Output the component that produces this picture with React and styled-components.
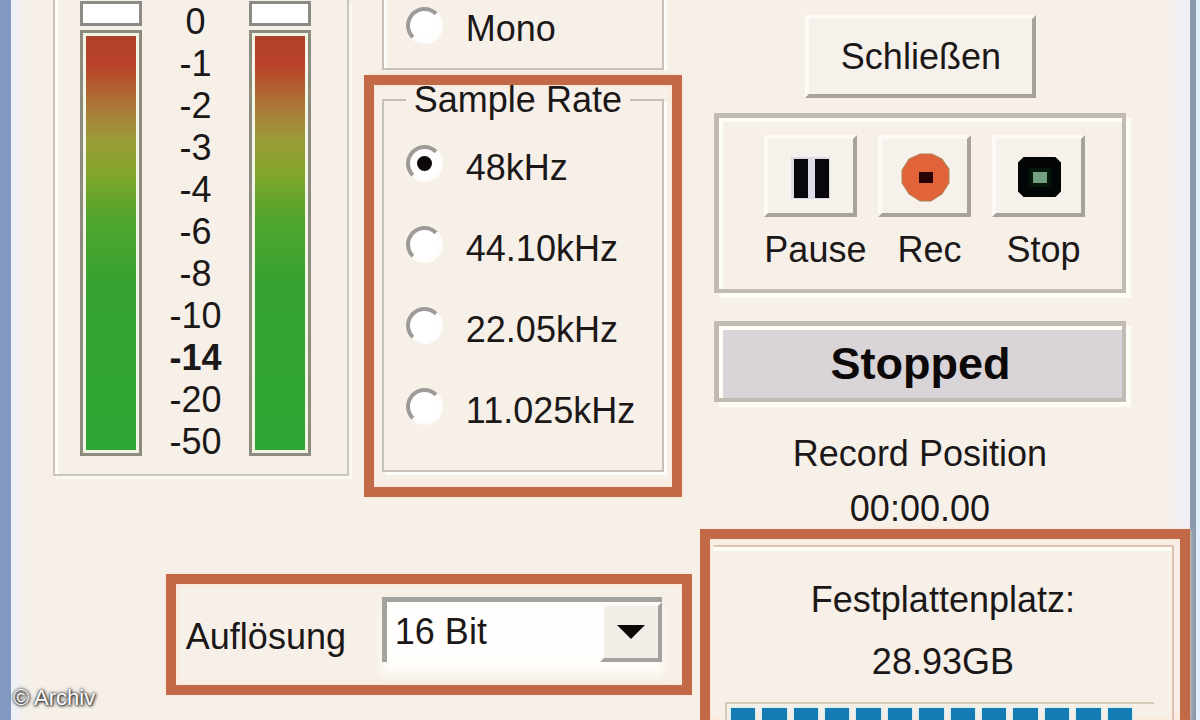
import React, { useState } from 'react';
import styled, { createGlobalStyle } from 'styled-components';

const GlobalStyle = createGlobalStyle`
  * {
    box-sizing: border-box;
  }

  body {
    margin: 0;
    background: #f6f0e9;
    color: #1c1818;
    font-family: 'Liberation Sans', Arial, sans-serif;
    font-size: 36px;
    line-height: 42px;
  }
`;

const Window = styled.main`
  position: relative;
  display: grid;
  grid-template-columns: 682fr 497fr;
  column-gap: 8px;
  min-height: 100vh;
  border-left: 11px solid #8299c1;
  border-right: 4px solid #dff0fa;
  background: linear-gradient(
    to right,
    #eef0f8 0,
    #f4efea 14px,
    #f6f0e9 24px,
    #f6f0e9 calc(100% - 32px),
    #f1eff4 calc(100% - 16px),
    #f1eff4 calc(100% - 6px),
    #8b98ab calc(100% - 6px)
  );
`;

const Settings = styled.section`
  display: flex;
  flex-direction: column;
  align-items: flex-end;
  justify-content: space-between;
  padding-bottom: 25px;
`;

const TopRow = styled.div`
  display: flex;
  align-items: flex-start;
  align-self: stretch;
  gap: 15px;
  padding: 0 10px 0 42px;
`;

const Levels = styled.div`
  flex: 1;
  display: flex;
  justify-content: space-between;
  height: 476px;
  padding: 1px 36px 18px 25px;
  border: 2px solid #cbc5be;
  border-top: 0;
  box-shadow: inset 3px 0 0 #fffdfa, 3px 3px 0 #fbf8f4;
`;

const Meter = styled.div`
  display: flex;
  flex-direction: column;
  gap: 4px;
  width: 62px;
`;

const ClipLamp = styled.div`
  height: 25px;
  border: 3px solid #8d8b86;
  background: #fff;
`;

const MeterBar = styled.div`
  flex: 1;
  padding: 3px;
  border: 3px solid #8d8b7d;
  background: #f3f6e4;
`;

const MeterFill = styled.div`
  height: 100%;
  background: linear-gradient(
    #b03f2b 0,
    #ba432a 30px,
    #a97d38 75px,
    #9a9c38 105px,
    #84a52a 135px,
    #4fa52d 185px,
    #35a231 250px,
    #2ca534 100%
  );
`;

const Scale = styled.ol`
  margin: 0;
  padding: 0;
  list-style: none;
  text-align: center;
`;

const Mark = styled.li`
  font-weight: ${props => (props.$bold ? 'bold' : 'normal')};
`;

const Options = styled.div`
  display: flex;
  flex-direction: column;
  gap: 5px;
  width: 318px;
`;

const ChannelGroup = styled.div`
  height: 70px;
  margin: 0 18px;
  padding: 6px 0 0 22px;
  border: 2px solid #c6c1bb;
  border-top: 0;
  box-shadow: inset 3px 0 0 #fffdfa, 3px 0 0 #fffdfa;
`;

const Highlight = styled.div`
  border: 10px solid #c26a48;
  background: #f7f0e9;
  box-shadow: 0 0 4px #ffe0c8, inset 0 0 6px #ffe3d0;
`;

const RateHighlight = styled(Highlight)`
  padding: 0 8px 15px;
`;

const RateGroup = styled.fieldset`
  min-width: 0;
  margin: 0;
  padding: 11px 0 20px 22px;
  border: 2px solid #c6c1bb;
  box-shadow: 3px 3px 0 #fffdfa;
`;

const Legend = styled.legend`
  padding: 0 8px;
  line-height: 30px;
  white-space: nowrap;
`;

const RadioLabel = styled.label`
  display: flex;
  align-items: center;
  gap: 23px;
  height: ${props => (props.$tall ? '81px' : '44px')};
`;

const RadioText = styled.span`
  padding-top: 2px;
`;

const RadioInput = styled.input`
  appearance: none;
  flex: none;
  display: grid;
  place-items: center;
  width: 37px;
  height: 37px;
  margin: 0 0 6px;
  border: 4px solid;
  border-color: #9d9a97 #fffdfb #fffdfb #9d9a97;
  border-radius: 50%;
  background: #fff;

  &:checked::before {
    content: '';
    width: 15px;
    height: 15px;
    border-radius: 50%;
    background: #0d0909;
  }
`;

const Radio = ({ name, label, tall, checked, onChange }) => (
  <RadioLabel $tall={tall}>
    <RadioInput type="radio" name={name} checked={checked} onChange={onChange} />
    <RadioText>{label}</RadioText>
  </RadioLabel>
);

const ResolutionHighlight = styled(Highlight)`
  display: flex;
  align-items: flex-start;
  justify-content: space-between;
  width: 526px;
  height: 121px;
  padding: 13px 20px 0 10px;
`;

const ResolutionLabel = styled.label`
  padding-top: 19px;
`;

const SelectBox = styled.div`
  position: relative;
  width: 280px;
  height: 65px;
`;

const Select = styled.select`
  appearance: none;
  width: 100%;
  height: 100%;
  padding: 0 70px 0 8px;
  border: 5px solid #a3a29f;
  border-right-width: 0;
  border-bottom-width: 0;
  border-radius: 0;
  background: #fffefc;
  box-shadow: 0 12px 8px #fffdf8;
  color: inherit;
  font: inherit;
`;

const SelectArrow = styled.span`
  position: absolute;
  right: 0;
  top: 5px;
  bottom: 0;
  display: flex;
  align-items: center;
  justify-content: center;
  width: 62px;
  border: 4px solid #a3a29f;
  border-top-color: #fffefc;
  border-left-color: #fffefc;
  background: #f4eee8;
  pointer-events: none;
`;

const Recorder = styled.section`
  display: flex;
  flex-direction: column;
  align-items: stretch;
  padding-top: 15px;
  padding-right: 6px;
`;

const Raised = styled.button`
  border: 4px solid;
  border-color: #fdfaf5 #a8a29c #a8a29c #fdfaf5;
  border-radius: 0;
  background: #f6f1ea;
  color: inherit;
  font: inherit;
`;

const CloseButton = styled(Raised)`
  align-self: center;
  width: 231px;
  height: 83px;
  margin-right: 48px;
  padding: 0;
`;

const Sunken = styled.div`
  margin: 0 64px 0 14px;
  border: 4px solid #c2bbb3;
  border-top-width: 5px;
  border-left-width: 5px;
  box-shadow: 5px 5px 0 #fffdf8, inset 4px 4px 0 #fffdf8;
`;

const Transport = styled(Sunken)`
  display: flex;
  justify-content: center;
  gap: 11px;
  height: 180px;
  margin-top: 15px;
  padding: 17px 0 0 18px;
`;

const TransportItem = styled.div`
  width: 103px;
  text-align: center;
`;

const TransportButton = styled(Raised)`
  display: flex;
  align-items: center;
  justify-content: center;
  width: 93px;
  height: 82px;
  padding: 4px 0 0 4px;
`;

const Caption = styled.label`
  display: block;
  margin-top: 12px;
`;

const Status = styled(Sunken)`
  height: 81px;
  margin-top: 28px;
  background: #d8d4d7;
  color: #0d0909;
  font-size: 45px;
  font-weight: bold;
  line-height: 76px;
  text-align: center;
`;

const Readout = styled.div`
  display: flex;
  flex-direction: column;
  gap: 15px;
  margin-right: 60px;
  padding: 32px 0 0 10px;
  line-height: 40px;
  text-align: center;
`;

const DiskHighlight = styled(Highlight)`
  flex: 1;
  display: flex;
  padding: 6px 6px 0 4px;
  border-bottom: 0;
`;

const DiskSpace = styled.div`
  flex: 1;
  display: flex;
  flex-direction: column;
  padding-top: 22px;
  border: 2px solid #dfc2b0;
  border-bottom: 0;
  border-left: 0;
  box-shadow: inset 0 4px 0 #fffdf8;
  line-height: 62px;
  text-align: center;
`;

const DiskBar = styled.div`
  flex: 1;
  display: flex;
  gap: 7px;
  margin: 9px 18px 0 11px;
  padding: 4px 22px 0 4px;
  border: 2px solid #cfccb8;
  border-bottom: 0;
  border-right: 0;
`;

const DiskBlock = styled.span`
  flex: 1;
  background: #147bb3;
  box-shadow: 0 0 3px #a5e8f5;
`;

const Credit = styled.small`
  position: absolute;
  left: 2px;
  bottom: 8px;
  color: #fff;
  font-size: 22px;
  line-height: 28px;
  text-shadow: 0 0 2px #222, 1px 1px 3px #222, 0 0 4px #666;
`;

const marks = ['0', '-1', '-2', '-3', '-4', '-6', '-8', '-10', '-14', '-20', '-50'];
const rates = ['48kHz', '44.10kHz', '22.05kHz', '11.025kHz'];

const PauseIcon = () => (
  <svg width="50" height="50" viewBox="0 0 50 50" aria-hidden="true">
    <path d="M4 4h39v42H4z" fill="#dedae6" />
    <path d="M7 6h14v39H7zM28 6h14v39H28z" fill="#08070b" />
  </svg>
);

const RecIcon = () => (
  <svg width="50" height="50" viewBox="0 0 50 50" aria-hidden="true">
    <path d="M19 1h12l10 5 7 10v14l-7 11-11 7H19L8 41 1 30V17L8 6z" fill="#e0633a" stroke="#a98257" strokeWidth="1" />
    <path d="M18 19h14v11H18z" fill="#280404" />
  </svg>
);

const StopIcon = () => (
  <svg width="50" height="50" viewBox="0 0 50 50" aria-hidden="true">
    <path d="M9 5h31l5 5v28l-5 5H9l-5-5V10z" fill="#030604" stroke="#030604" strokeWidth="2" strokeLinejoin="round" />
    <path d="M14 15h22v19H14z" fill="#04170a" />
    <path d="M18 19h14v11H18z" fill="#72a080" />
  </svg>
);

const LevelMeter = () => (
  <Meter>
    <ClipLamp />
    <MeterBar>
      <MeterFill />
    </MeterBar>
  </Meter>
);

const App = () => {
  const [mono, setMono] = useState(false);
  const [rate, setRate] = useState('48kHz');
  const [status, setStatus] = useState('Stopped');

  const transport = [
    { id: 'pause', text: 'Pause', icon: <PauseIcon />, next: 'Paused' },
    { id: 'rec', text: 'Rec', icon: <RecIcon />, next: 'Recording' },
    { id: 'stop', text: 'Stop', icon: <StopIcon />, next: 'Stopped' },
  ];

  return (
    <>
      <GlobalStyle />
      <Window>
        <Settings>
          <TopRow>
            <Levels>
              <LevelMeter />
              <Scale>
                {marks.map(mark => (
                  <Mark key={mark} $bold={mark === '-14'}>{mark}</Mark>
                ))}
              </Scale>
              <LevelMeter />
            </Levels>
            <Options>
              <ChannelGroup>
                <Radio name="channels" label="Mono" checked={mono} onChange={() => setMono(true)} />
              </ChannelGroup>
              <RateHighlight>
                <RateGroup>
                  <Legend>Sample Rate</Legend>
                  {rates.map(item => (
                    <Radio
                      key={item}
                      name="rate"
                      label={item}
                      tall
                      checked={rate === item}
                      onChange={() => setRate(item)}
                    />
                  ))}
                </RateGroup>
              </RateHighlight>
            </Options>
          </TopRow>
          <ResolutionHighlight>
            <ResolutionLabel htmlFor="resolution">Auflösung</ResolutionLabel>
            <SelectBox>
              <Select id="resolution" defaultValue="16">
                <option value="16">16 Bit</option>
              </Select>
              <SelectArrow>
                <svg width="28" height="14" viewBox="0 0 28 14" aria-hidden="true">
                  <path d="M0 0h28L14 14z" fill="#0d0909" />
                </svg>
              </SelectArrow>
            </SelectBox>
          </ResolutionHighlight>
        </Settings>
        <Recorder>
          <CloseButton type="button">Schließen</CloseButton>
          <Transport>
            {transport.map(({ id, text, icon, next }) => (
              <TransportItem key={id}>
                <TransportButton id={id} type="button" onClick={() => setStatus(next)}>
                  {icon}
                </TransportButton>
                <Caption htmlFor={id}>{text}</Caption>
              </TransportItem>
            ))}
          </Transport>
          <Status role="status">{status}</Status>
          <Readout>
            <div>Record Position</div>
            <div>00:00.00</div>
          </Readout>
          <DiskHighlight>
            <DiskSpace>
              <div>Festplattenplatz:</div>
              <div>28.93GB</div>
              <DiskBar>
                {Array.from({ length: 13 }, (_, i) => (
                  <DiskBlock key={i} />
                ))}
              </DiskBar>
            </DiskSpace>
          </DiskHighlight>
        </Recorder>
        <Credit>© Archiv</Credit>
      </Window>
    </>
  );
};

export default App;
